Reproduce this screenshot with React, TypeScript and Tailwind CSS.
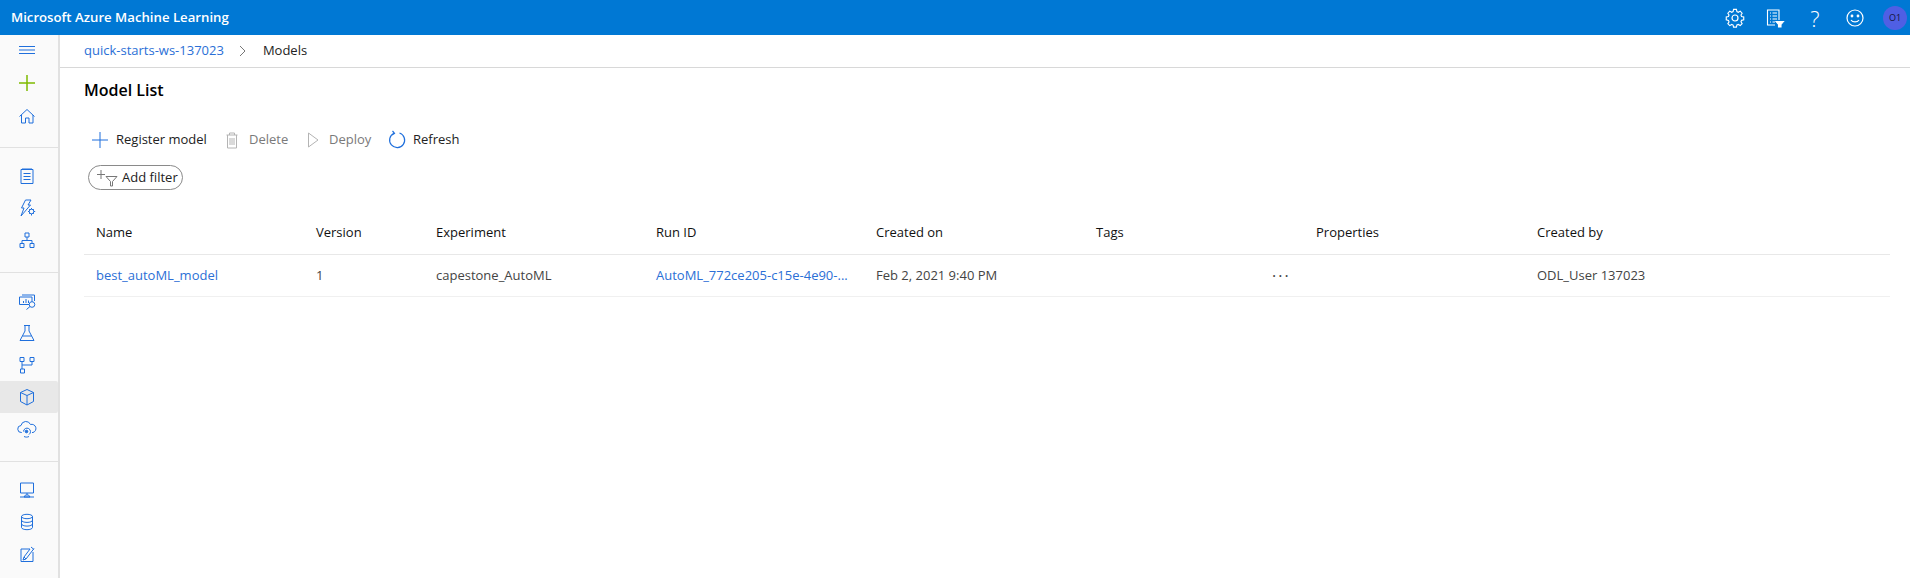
import React from "react";

const S = ({ children, size = 20, color = "#1f6fdc", sw = 1 }: { children: React.ReactNode; size?: number; color?: string; sw?: number }) => (
  <svg width={size} height={size} viewBox="0 0 20 20" fill="none" stroke={color} strokeWidth={sw} className="shrink-0">
    {children}
  </svg>
);

const Rail = ({ children, active, h = "h-[32px]" }: { children: React.ReactNode; active?: boolean; h?: string }) => (
  <div className={`flex ${h} w-full items-center justify-center pr-[4px] ${active ? "rounded-r-[2px] bg-[#e8e8e8]" : ""}`}>{children}</div>
);

const Hamburger = () => <S><path d="M2 6.500h16M2 10h16M2 13.500h16" /></S>;
const Plus = () => <S size={20} color="#7fba00" sw={1.500}><path d="M10 2v16M2 10h16" /></S>;
const Home = () => <S><path d="M2.500 10.500 10 3.500l7.500 7M4.500 9v8h4v-5h3.500v5h4V9" /></S>;
const Notebook = () => <S><path d="M4 3.500h12V17.500H4zM6 2v2M8 2v2M10 2v2M12 2v2M14 2v2M6.500 7.500h7M6.500 10.500h7M6.500 13.500h7" /></S>;
const Bolt = () => <S><path d="M8.500 2h5.500l-3 5h2.500L4 18l3-8H4.500z" /><circle cx="14.500" cy="13.500" r="2.300" fill="#fafafa" /><path d="M14.500 10v1.200M14.500 15.800V17.500M11 13.500h1.200M16.800 13.500h1.400M12 11l.8.800M16.200 15.200l.8.800M12 16l.8-.800M16.200 11.800l.8-.800" /></S>;
const Tree = () => <S><path d="M8 3h4v4H8zM3 13.500h4v4H3zM13 13.500h4v4h-4zM10 7v3.500M5 13.500v-3h10v3" /></S>;
const Chart = () => <S><path d="M5 4h12.500v6M2.500 6h12.500v7.500H2.500z" /><path d="M6.500 12v-2M9 12V8M11.500 12V9.500" /><circle cx="15" cy="13.500" r="2.800" fill="#fafafa" /><path d="M13 15.500 9.500 18.500" /></S>;
const Flask = () => <S><path d="M7 2.500h6M8 2.500V8L3 17.500h14L12 8V2.500M5.500 13h9" /></S>;
const Pipeline = () => <S><path d="M3 2.500h4v4H3zM13 2.500h4v4h-4zM3.500 14h4v4h-4zM5 6.500V14M15 6.500V10H5" /></S>;
const Cube = () => <S><path d="M10 2.500 16.500 5.500v9L10 18 3.500 14.500v-9zM3.500 5.500 10 8.500l6.500-3M10 8.500V18" /></S>;
const Cloud = () => <S><path d="M5 13.500H4.500a3.500 3.500 0 0 1-.5-7 5 5 0 0 1 9.500-1 4 4 0 0 1 2.500 8h-1" /><path d="M6.500 12.500a3.500 3.500 0 1 1 5.500 3M7 17.500c1.500.8 3.500.8 5 0" /><circle cx="9.500" cy="12.500" r="1.300" fill="#1f6fdc" /></S>;
const Monitor = () => <S><path d="M3.500 3h13v10h-13zM10 13v2M7 17l1.500-2h3L13 17zM3 17h14" /></S>;
const Db = () => <S><ellipse cx="10" cy="4.500" rx="5.500" ry="2.200" /><path d="M4.500 4.500v11c0 1.200 2.500 2.200 5.500 2.200s5.500-1 5.500-2.200v-11M4.500 8.200c0 1.200 2.500 2.200 5.500 2.200s5.500-1 5.500-2.200M4.500 11.900c0 1.200 2.500 2.200 5.500 2.200s5.500-1 5.500-2.200" /></S>;
const Edit = () => <S><path d="M4 5h9l-6 8-1 3 3-1 8-10.500M16 8v9.500H4V5" /><path d="M7 13l2 2M14 3l3 2.500" /></S>;

const Cog = () => (
  <S color="#fff" size={20} sw={1.200}>
    <path d="M8.500 2h3l.5 2.300 1.500.7 2-1.200 2 2.200-1.200 1.900.6 1.600 2.300.5v3l-2.300.5-.6 1.500 1.200 2-2 2-2-1.200-1.500.6-.5 2.300h-3L8 18.500l-1.500-.6-2 1.200-2-2 1.200-2-.6-1.500L.8 13v-3l2.300-.5.6-1.600-1.200-1.900 2-2.200 2 1.200L8 4.300z" transform="translate(.5 -.5) scale(.95)" />
    <circle cx="10" cy="10" r="3" />
  </S>
);
const ListFilter = () => (
  <S color="#fff" size={20} sw={1.100}>
    <path d="M14 12V2H2.500v15H10" />
    <path d="M5 5h1M7.500 5H12M5 8h1M7.500 8H12M5 11h1M7.500 11H12M5 14h1M7.500 14H10" />
    <path d="M11 13.500h7.500L16 16.500V19h-2.500v-2.500z" fill="#fff" />
  </S>
);
const Smile = () => (
  <S color="#fff" size={20} sw={1.200}>
    <circle cx="10" cy="10" r="8" />
    <circle cx="7" cy="8" r=".8" fill="#fff" />
    <circle cx="13" cy="8" r=".8" fill="#fff" />
    <path d="M6 12c1.800 2.600 6.200 2.600 8 0" />
  </S>
);

const Tool = ({ icon, label, disabled, w, labelClass = "" }: { icon: React.ReactNode; label: string; disabled?: boolean; w: string; labelClass?: string }) => (
  <div className={`flex items-center gap-[6px] ${w} ${disabled ? "text-[#7a7a7a]" : "text-[#222]"}`}>
    {icon}
    <span className={labelClass}>{label}</span>
  </div>
);

const cols = ["w-[220px]", "w-[120px]", "w-[220px]", "w-[220px]", "w-[220px]", "w-[220px]", "w-[221px]", "w-[220px]"];

export default function App() {
  return (
    <div className="flex h-[578px] w-[1910px] flex-col overflow-hidden bg-white font-['Open_Sans',sans-serif] text-[13px] text-[#222]">
      <header className="flex h-[35px] shrink-0 items-center justify-between bg-[#0078d4] pl-[11px] pr-[3px] text-white">
        <div className="text-[13.200px] font-semibold">Microsoft Azure Machine Learning</div>
        <div className="flex items-center">
          <Cog />
          <div className="ml-[20px]"><ListFilter /></div>
          <div className="ml-[20px] w-[20px] text-center text-[22px] font-light leading-none">?</div>
          <div className="ml-[20px]"><Smile /></div>
          <div className="ml-[18px] flex h-[24px] w-[24px] items-center justify-center rounded-full bg-[#4f5fe4] text-[9px] text-[#14143a]">O1</div>
        </div>
      </header>
      <div className="flex min-h-0 flex-1">
        <nav className="flex w-[60px] shrink-0 flex-col border-r-2 border-[#e1e1e1] bg-[#fafafa]">
          <Rail h="h-[30px]"><Hamburger /></Rail>
          <div className="h-[1px]" />
          <Rail h="h-[34px]"><Plus /></Rail>
          <Rail><Home /></Rail>
          <div className="mb-[12px] mt-[15px] h-[1px] w-full bg-[#e1e1e1]" />
          <Rail><Notebook /></Rail>
          <Rail><Bolt /></Rail>
          <Rail><Tree /></Rail>
          <div className="mb-[12px] mt-[16px] h-[1px] w-full bg-[#e1e1e1]" />
          <Rail><Chart /></Rail>
          <Rail><Flask /></Rail>
          <Rail><Pipeline /></Rail>
          <Rail active><Cube /></Rail>
          <Rail><Cloud /></Rail>
          <div className="mb-[12px] mt-[16px] h-[1px] w-full bg-[#e1e1e1]" />
          <Rail><Monitor /></Rail>
          <Rail><Db /></Rail>
          <Rail><Edit /></Rail>
        </nav>
        <main className="min-w-0 flex-1">
          <div className="flex h-[33px] items-center border-b border-[#d8d8d8] pl-[24px]">
            <span className="text-[#2b6fd6]">quick-starts-ws-137023</span>
            <svg width="10" height="12" viewBox="0 0 10 12" fill="none" stroke="#777" className="ml-[14px] mr-[15px]"><path d="m2 1 5 5-5 5" /></svg>
            <span>Models</span>
          </div>
          <h1 className="ml-[24px] mt-[9px] text-[16px] font-semibold leading-[26px] text-black">Model List</h1>
          <div className="ml-[30px] mt-[25px] flex h-[24px] items-center">
            <Tool w="w-[132px]" label="Register model" icon={<S><path d="M10 2v16M2 10h16" /></S>} />
            <Tool w="w-[81px]" disabled labelClass="ml-px" label="Delete" icon={<S color="#b4b4b4"><path d="M4.500 5h11M7.500 5V3h5v2M5.500 5v13h9V5M8 8v7M10 8v7M12 8v7" /></S>} />
            <Tool w="w-[84px]" disabled label="Deploy" icon={<S color="#b4b4b4"><path d="M5.500 3v14L15 10z" /></S>} />
            <Tool w="w-[80px]" label="Refresh" icon={<S sw={1.200}><path d="M12.500 3a7.500 7.500 0 1 1-5.500.3M5.500 1l2 2.300-2.500 1.700" /></S>} />
          </div>
          <div className="ml-[28px] mt-[13px] flex h-[25px] w-[95px] items-center rounded-full border border-[#8a8a8a] pl-[7px]">
            <svg width="24" height="20" viewBox="0 0 24 20" fill="none" stroke="#777" className="shrink-0">
              <path d="M5 2v9M1 6.500h8" />
              <path d="M10 8.500h11l-4.500 5V18h-2v-4.500z" />
            </svg>
            <span className="ml-[2px] pt-[1px] text-[#222]">Add filter</span>
          </div>
          <div className="ml-[24px] mt-[21px] w-[1806px]">
            <div className="flex h-[44px] items-center border-b border-[#e8e8e8] pl-[12px] font-medium text-[#111]">
              {["Name", "Version", "Experiment", "Run ID", "Created on", "Tags", "Properties", "Created by"].map((c, i) => (
                <div key={c} className={cols[i]}>{c}</div>
              ))}
            </div>
            <div className="flex h-[42px] items-center border-b border-[#f0f0f0] pl-[12px] text-[#444]">
              <div className={`${cols[0]} text-[#2b6fd6]`}>best_autoML_model</div>
              <div className={cols[1]}>1</div>
              <div className={cols[2]}>capestone_AutoML</div>
              <div className={`${cols[3]} text-[#2b6fd6]`}>AutoML_772ce205-c15e-4e90-...</div>
              <div className={cols[4]}>Feb 2, 2021 9:40 PM</div>
              <div className={`${cols[5]} pl-[176px] text-[16px] leading-none tracking-[2px]`}>···</div>
              <div className={cols[6]} />
              <div className={cols[7]}>ODL_User 137023</div>
            </div>
          </div>
        </main>
      </div>
    </div>
  );
}
